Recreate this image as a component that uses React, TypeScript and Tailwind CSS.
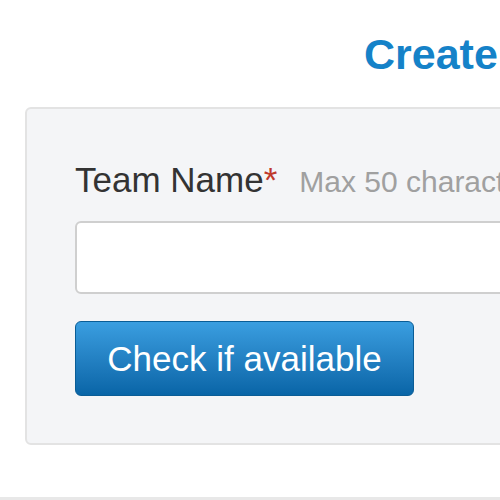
const TeamForm = () => {
  return (
    <div className="w-[500px] h-[500px] overflow-hidden bg-white font-['Liberation_Sans',Arial,sans-serif]">
      <h1 className="pt-[31px] pl-[364px] whitespace-nowrap text-[43px] leading-[47px] font-bold text-[#1582c8]">
        Create a Team
      </h1>

      <div className="mt-[29px] ml-[25px] w-[560px] rounded-[6px] border-2 border-[#e3e3e3] bg-[#f4f5f7] pt-[51px] pb-[47px] pl-[48px]">
        <label className="block whitespace-nowrap text-[35px] leading-[40px] text-[#333]">
          Team Name<span className="text-[#c0392b]">*</span>
          <span className="ml-[22px] text-[30px] text-[#a0a0a0]">Max 50 characters</span>
        </label>

        <input
          type="text"
          className="mt-[19px] block h-[73px] w-[520px] rounded-[6px] border-2 border-[#cfcfcf] bg-white outline-none"
        />

        <button
          type="button"
          className="mt-[27px] flex h-[75px] w-[339px] items-center justify-center rounded-[6px] border border-[#0a5d96] bg-gradient-to-b from-[#3a9ee0] to-[#0865a7] text-[35px] leading-[35px] text-white"
        >
          Check if available
        </button>
      </div>

      <div className="mt-[52px] h-[4px] bg-[#e8e8e8]" />
    </div>
  )
}

export default TeamForm
